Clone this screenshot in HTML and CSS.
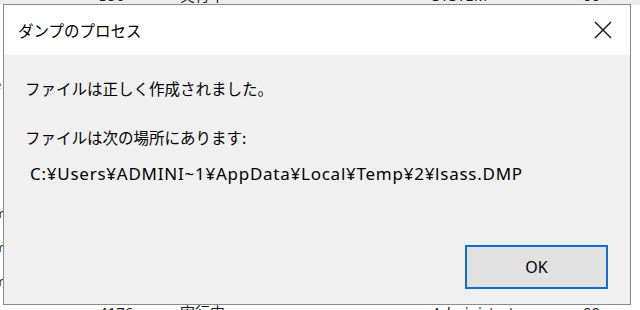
FILE: index.html
```html
<!DOCTYPE html>
<html lang="ja">
<head>
    <meta charset="UTF-8">
    <meta name="viewport" content="width=device-width, initial-scale=1.0">
    <title>ダンプのプロセス</title>
    <link rel="stylesheet" href="styles.css">
</head>
<body>
    <!-- 背面のタスクマネージャー (一部だけ見える) -->
    <div class="backdrop">
        <div class="proc-row row-top">
            <span class="c-pid">356</span>
            <span class="c-state">実行中</span>
            <span class="c-user">SYSTEM</span>
            <span class="c-cpu">00</span>
        </div>
        <div class="side-col">
            <span>e</span>
            <span>c</span>
            <span>m</span>
            <span>m</span>
            <span>m</span>
        </div>
        <div class="proc-row row-bottom">
            <span class="c-pid">4176</span>
            <span class="c-state">実行中</span>
            <span class="c-user">Administrator</span>
            <span class="c-cpu">00</span>
        </div>
    </div>

    <div class="dialog">
        <div class="title-bar">
            <span class="title">ダンプのプロセス</span>
            <button class="close-btn" aria-label="閉じる">
                <svg width="18" height="18" viewBox="0 0 18 18">
                    <path d="M1 1 L17 17 M17 1 L1 17" stroke="#111" stroke-width="1.4" fill="none"/>
                </svg>
            </button>
        </div>
        <div class="content">
            <p class="msg msg-first">ファイルは正しく作成されました。</p>
            <p class="msg msg-second">ファイルは次の場所にあります:</p>
            <p class="msg path">C:¥Users¥ADMINI~1¥AppData¥Local¥Temp¥2¥lsass.DMP</p>
            <div class="actions">
                <button class="ok-btn">OK</button>
            </div>
        </div>
    </div>
</body>
</html>
```

FILE: styles.css
```css
html, body {
    margin: 0;
    padding: 0;
}
body {
    width: 640px;
    height: 310px;
    overflow: hidden;
    position: relative;
    background-color: #ffffff;
    font-family: "Noto Sans", "Noto Sans CJK JP", sans-serif;
    color: #000;
}
.backdrop {
    font-size: 15px;
    color: #1a1a1a;
}
.proc-row {
    position: absolute;
    left: 0;
    width: 640px;
    height: 20px;
    line-height: 20px;
    display: grid;
    grid-template-columns: 99px 81px 252px 151px 57px;
}
.proc-row span:first-child {
    grid-column: 2;
}
.row-top {
    top: -15px;
    background-color: #ececec;
}
.row-bottom {
    top: 302px;
}
.side-col {
    position: absolute;
    left: -6px;
    top: 78px;
    display: flex;
    flex-direction: column;
    gap: 0;
    font-size: 13px;
    line-height: 12px;
    color: #333;
}
.side-col span:nth-child(3) {
    margin-top: 105px;
}
.side-col span:nth-child(4),
.side-col span:nth-child(5) {
    margin-top: 22px;
}
.dialog {
    position: absolute;
    left: 3px;
    top: 4px;
    width: 626px;
    height: 299px;
    border: 1px solid #8a8a8a;
    background-color: #f0f0f0;
    display: flex;
    flex-direction: column;
}
.title-bar {
    height: 50px;
    background-color: #ffffff;
    display: flex;
    align-items: center;
    justify-content: space-between;
    padding-left: 14px;
}
.title {
    font-family: "Noto Sans CJK JP", sans-serif;
    font-size: 15.5px;
    margin-top: -1px;
}
.close-btn {
    width: 46px;
    height: 50px;
    border: none;
    background: transparent;
    padding: 0;
    margin-right: 4px;
    display: flex;
    align-items: center;
    justify-content: center;
}
.content {
    flex: 1;
    display: flex;
    flex-direction: column;
    padding: 0 0 0 21px;
}
.msg {
    margin: 0;
    font-size: 15.5px;
    line-height: 22px;
}
.msg-first {
    margin-top: 22px;
    font-family: "Noto Sans CJK JP", sans-serif;
}
.msg-second {
    margin-top: 27px;
    font-family: "Noto Sans CJK JP", sans-serif;
}
.path {
    margin-top: 15px;
    padding-left: 5px;
    font-size: 17px;
    letter-spacing: 0.75px;
}
.actions {
    margin-top: auto;
    display: flex;
    justify-content: flex-end;
    padding: 0 22px 15px 0;
}
.ok-btn {
    width: 143px;
    height: 44px;
    border: 2px solid #0a6fd0;
    background-color: #e1e1e1;
    font-family: "Noto Sans", sans-serif;
    font-size: 16px;
    color: #000;
    padding: 0;
}
```
